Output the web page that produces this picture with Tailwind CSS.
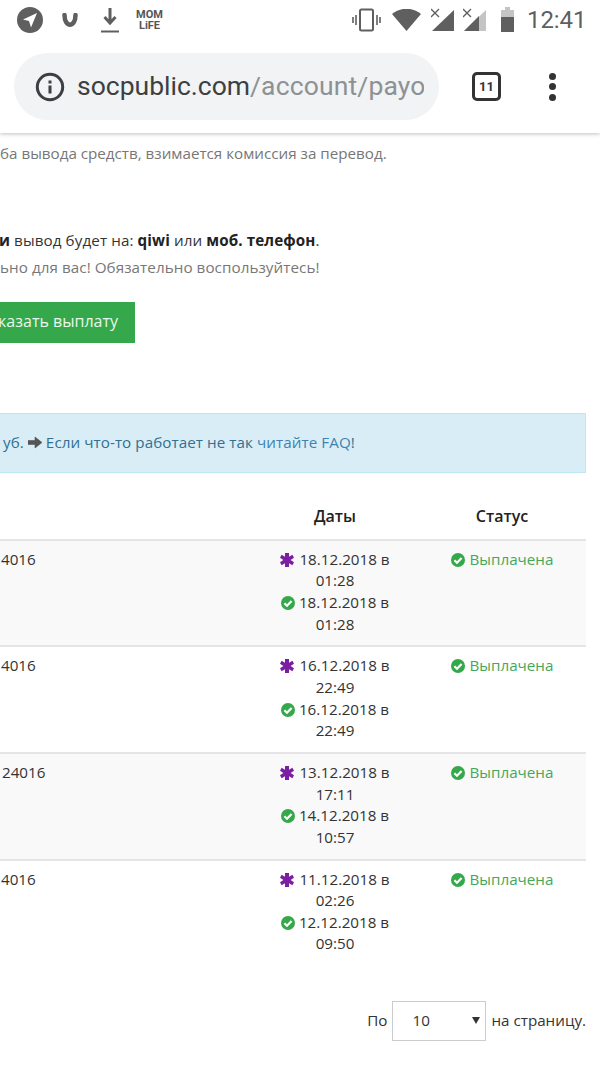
<!DOCTYPE html>
<html lang="ru">
<head>
<meta charset="utf-8">
<script src="https://cdn.jsdelivr.net/npm/@tailwindcss/browser@4"></script>
</head>
<body class="bg-white">
<div class="w-[600px] h-[1066px] overflow-hidden relative font-['Open_Sans',sans-serif] text-[15.2px] leading-[21.6px] text-[#333]">

  <!-- Browser chrome -->
  <header class="h-[133px] bg-white relative z-10 shadow-[0_1px_4px_rgba(0,0,0,0.25)] font-['Roboto',sans-serif]">
    <div class="h-[40px] flex items-center text-[#5f5f5f]">
      <svg class="ml-[17px] w-[26px] h-[26px] shrink-0" viewBox="0 0 26 26"><circle cx="13" cy="13" r="13" fill="#5f5f5f"/><path d="M6 12.5 L20 6 L14 20.5 L12 14 Z" fill="#fff"/></svg>
      <svg class="ml-[19px] w-[16px] h-[15px] shrink-0" viewBox="0 0 16 15"><path d="M2.5 2 C2.5 15 13.5 15 13.5 2" fill="none" stroke="#5f5f5f" stroke-width="4.5" stroke-linecap="round"/></svg>
      <svg class="ml-[23px] w-[18px] h-[26px] shrink-0" viewBox="0 0 18 26"><path d="M9 1 V14 M3.5 10 L9 16 L14.5 10" fill="none" stroke="#5f5f5f" stroke-width="3"/><path d="M0 24.5 H18" stroke="#5f5f5f" stroke-width="2"/></svg>
      <div class="ml-[16px] w-[29px] shrink-0 text-center text-[11px] leading-[11px] font-bold text-[#555]">MOM<br>LiFE</div>
      <svg class="ml-[188px] w-[29px] h-[24px] shrink-0" viewBox="0 0 29 24"><rect x="8" y="1.5" width="13" height="21" rx="1.5" fill="none" stroke="#5f5f5f" stroke-width="2"/><path d="M4 7 V17 M1 9 V15 M25 7 V17 M28 9 V15" stroke="#5f5f5f" stroke-width="1.6"/></svg>
      <svg class="ml-[11px] w-[29px] h-[22px] shrink-0" viewBox="0 0 29 22"><path d="M0 5 C8 -2 21 -2 29 5 L14.5 22 Z" fill="#5f5f5f"/></svg>
      <svg class="ml-[10px] w-[23px] h-[24px] shrink-0" viewBox="0 0 23 24"><path d="M23 2 V23 H1 Z" fill="#5f5f5f"/><path d="M0 1 L8 9 M8 1 L0 9" stroke="#5f5f5f" stroke-width="1.3"/></svg>
      <svg class="ml-[9px] w-[23px] h-[24px] shrink-0" viewBox="0 0 23 24"><path d="M23 2 V23 H1 Z" fill="#c4c4c4"/><path d="M16 8 V23 H1 Z" fill="#5f5f5f"/><path d="M0 1 L8 9 M8 1 L0 9" stroke="#5f5f5f" stroke-width="1.3"/></svg>
      <svg class="ml-[14px] w-[15px] h-[26px] shrink-0" viewBox="0 0 15 26"><path d="M5 0 H10 V3 H14 V25 H1 V3 H5 Z" fill="#c4c4c4"/><rect x="1" y="10" width="13" height="15" fill="#5f5f5f"/></svg>
      <span class="ml-[12px] text-[24px] leading-none text-[#5f5f5f] tracking-[-0.1px]">12:41</span>
    </div>
    <div class="flex items-center mt-[13px]">
      <div class="ml-[14px] w-[425px] h-[67px] rounded-full bg-[#f1f3f4] flex items-center overflow-hidden">
        <svg class="ml-[21px] w-[30px] h-[30px] shrink-0" viewBox="0 0 30 30"><circle cx="15" cy="15" r="12.7" fill="none" stroke="#3c4043" stroke-width="3"/><rect x="13.5" y="13.5" width="3" height="8" fill="#3c4043"/><rect x="13.5" y="8.5" width="3" height="3" fill="#3c4043"/></svg>
        <div class="ml-[12px] w-[347px] overflow-hidden whitespace-nowrap text-[26.5px] leading-none"><span class="text-[#3c4043]">socpublic.com</span><span class="text-[#8e9194] tracking-[0.15px]">/account/payo</span></div>
      </div>
      <div class="ml-[33px] w-[29px] h-[29px] border-[3px] border-[#333] rounded-[5px] flex items-center justify-center text-[13px] font-bold text-[#333] leading-none">11</div>
      <div class="ml-[48px] flex flex-col gap-[3.5px]">
        <span class="block w-[7px] h-[7px] rounded-full bg-[#333]"></span>
        <span class="block w-[7px] h-[7px] rounded-full bg-[#333]"></span>
        <span class="block w-[7px] h-[7px] rounded-full bg-[#333]"></span>
      </div>
    </div>
  </header>

  <!-- Page content, scrolled sideways so the left edge is cut off -->
  <main class="whitespace-nowrap">
    <p class="mt-[10px] text-[#777]">ба вывода средств, взимается комиссия за перевод.</p>

    <p class="mt-[65px] text-[#333] tracking-[0.1px]"><b class="font-bold text-[#222] -ml-[1px]">и</b> вывод будет на: <b class="font-bold text-[#222]">qiwi</b> или <b class="font-bold text-[#222]">моб. телефон</b>.</p>
    <p class="mt-[6px] text-[#777] tracking-[0.07px]">ьно для вас! Обязательно воспользуйтесь!</p>

    <div class="mt-[23px] w-[135px] h-[41px] bg-[#34a84a] text-[#eaf6ec] flex items-center justify-end pr-[17px] text-[16px]">казать выплату</div>

    <div class="mt-[70px] w-[586px] h-[60px] bg-[#d9edf7] border border-l-0 border-[#bce8f1] text-[#31708f] flex items-center">
      <span class="ml-[3px] tracking-[0.07px]">уб. <svg class="inline-block w-[14px] h-[13px] align-[-1px]" viewBox="0 0 14 13"><path d="M0 4.5 H7 V1 L14 6.5 L7 12 V8.5 H0 Z" fill="#555" stroke="#555" stroke-width="0.6" stroke-linejoin="round"/></svg> Если что-то работает не так <a class="text-[#3d83b0]">читайте FAQ</a>!</span>
    </div>

    <!-- Table -->
    <div class="mt-[24px] w-[586px]">
      <div class="flex h-[44px] pt-[9px] font-semibold text-[#222] border-b-2 border-[#e5e5e5] text-[16px]">
        <div class="flex-1"></div>
        <div class="w-[130px] mr-[18px] text-center">Даты</div>
        <div class="w-[168px] text-center">Статус</div>
      </div>

      <div class="flex bg-[#f9f9f9] border-b-2 border-[#e5e5e5] h-[106.6px] pt-[8px]">
        <div class="flex-1 pl-[1px]">4016</div>
        <div class="w-[130px] mr-[18px] text-center whitespace-normal px-[8px]">
          <div><svg class="inline-block w-[14px] h-[14px] align-[-2px] mr-[1px]" viewBox="0 0 14 14"><path d="M5 0 H9 V3.8 L12.4 1.8 L14 4.8 L10.6 7 L14 9.2 L12.4 12.2 L9 10.2 V14 H5 V10.2 L1.6 12.2 L0 9.2 L3.4 7 L0 4.8 L1.6 1.8 L5 3.8 Z" fill="#7b1fa2"/></svg> 18.12.2018 в 01:28</div>
          <div><svg class="inline-block w-[14px] h-[14px] align-[-2px] mr-[4px]" viewBox="0 0 14 14"><circle cx="7" cy="7" r="7" fill="#34a84a"/><path d="M3.4 7.2 L6 9.8 L10.6 5" fill="none" stroke="#fff" stroke-width="2.2"/></svg>18.12.2018 в 01:28</div>
        </div>
        <div class="w-[168px] text-center text-[#43a85a]"><svg class="inline-block w-[14px] h-[14px] align-[-2px] mr-[1px]" viewBox="0 0 14 14"><circle cx="7" cy="7" r="7" fill="#34a84a"/><path d="M3.4 7.2 L6 9.8 L10.6 5" fill="none" stroke="#fff" stroke-width="2.2"/></svg> Выплачена</div>
      </div>

      <div class="flex bg-white border-b-2 border-[#e5e5e5] h-[106.6px] pt-[8px]">
        <div class="flex-1 pl-[1px]">4016</div>
        <div class="w-[130px] mr-[18px] text-center whitespace-normal px-[8px]">
          <div><svg class="inline-block w-[14px] h-[14px] align-[-2px] mr-[1px]" viewBox="0 0 14 14"><path d="M5 0 H9 V3.8 L12.4 1.8 L14 4.8 L10.6 7 L14 9.2 L12.4 12.2 L9 10.2 V14 H5 V10.2 L1.6 12.2 L0 9.2 L3.4 7 L0 4.8 L1.6 1.8 L5 3.8 Z" fill="#7b1fa2"/></svg> 16.12.2018 в 22:49</div>
          <div><svg class="inline-block w-[14px] h-[14px] align-[-2px] mr-[4px]" viewBox="0 0 14 14"><circle cx="7" cy="7" r="7" fill="#34a84a"/><path d="M3.4 7.2 L6 9.8 L10.6 5" fill="none" stroke="#fff" stroke-width="2.2"/></svg>16.12.2018 в 22:49</div>
        </div>
        <div class="w-[168px] text-center text-[#43a85a]"><svg class="inline-block w-[14px] h-[14px] align-[-2px] mr-[1px]" viewBox="0 0 14 14"><circle cx="7" cy="7" r="7" fill="#34a84a"/><path d="M3.4 7.2 L6 9.8 L10.6 5" fill="none" stroke="#fff" stroke-width="2.2"/></svg> Выплачена</div>
      </div>

      <div class="flex bg-[#f9f9f9] border-b-2 border-[#e5e5e5] h-[106.6px] pt-[8px]">
        <div class="flex-1 pl-[2px]">24016</div>
        <div class="w-[130px] mr-[18px] text-center whitespace-normal px-[8px]">
          <div><svg class="inline-block w-[14px] h-[14px] align-[-2px] mr-[1px]" viewBox="0 0 14 14"><path d="M5 0 H9 V3.8 L12.4 1.8 L14 4.8 L10.6 7 L14 9.2 L12.4 12.2 L9 10.2 V14 H5 V10.2 L1.6 12.2 L0 9.2 L3.4 7 L0 4.8 L1.6 1.8 L5 3.8 Z" fill="#7b1fa2"/></svg> 13.12.2018 в 17:11</div>
          <div><svg class="inline-block w-[14px] h-[14px] align-[-2px] mr-[4px]" viewBox="0 0 14 14"><circle cx="7" cy="7" r="7" fill="#34a84a"/><path d="M3.4 7.2 L6 9.8 L10.6 5" fill="none" stroke="#fff" stroke-width="2.2"/></svg>14.12.2018 в 10:57</div>
        </div>
        <div class="w-[168px] text-center text-[#43a85a]"><svg class="inline-block w-[14px] h-[14px] align-[-2px] mr-[1px]" viewBox="0 0 14 14"><circle cx="7" cy="7" r="7" fill="#34a84a"/><path d="M3.4 7.2 L6 9.8 L10.6 5" fill="none" stroke="#fff" stroke-width="2.2"/></svg> Выплачена</div>
      </div>

      <div class="flex bg-white h-[106.6px] pt-[8px]">
        <div class="flex-1 pl-[1px]">4016</div>
        <div class="w-[130px] mr-[18px] text-center whitespace-normal px-[8px]">
          <div><svg class="inline-block w-[14px] h-[14px] align-[-2px] mr-[1px]" viewBox="0 0 14 14"><path d="M5 0 H9 V3.8 L12.4 1.8 L14 4.8 L10.6 7 L14 9.2 L12.4 12.2 L9 10.2 V14 H5 V10.2 L1.6 12.2 L0 9.2 L3.4 7 L0 4.8 L1.6 1.8 L5 3.8 Z" fill="#7b1fa2"/></svg> 11.12.2018 в 02:26</div>
          <div><svg class="inline-block w-[14px] h-[14px] align-[-2px] mr-[4px]" viewBox="0 0 14 14"><circle cx="7" cy="7" r="7" fill="#34a84a"/><path d="M3.4 7.2 L6 9.8 L10.6 5" fill="none" stroke="#fff" stroke-width="2.2"/></svg>12.12.2018 в 09:50</div>
        </div>
        <div class="w-[168px] text-center text-[#43a85a]"><svg class="inline-block w-[14px] h-[14px] align-[-2px] mr-[1px]" viewBox="0 0 14 14"><circle cx="7" cy="7" r="7" fill="#34a84a"/><path d="M3.4 7.2 L6 9.8 L10.6 5" fill="none" stroke="#fff" stroke-width="2.2"/></svg> Выплачена</div>
      </div>
    </div>

    <!-- Per page -->
    <div class="mt-[34px] w-[586px] flex justify-end items-center">
      <span>По</span>
      <div class="ml-[5px] w-[94px] h-[40px] border border-[#ccc] flex items-center justify-between pl-[19px] pr-[5px]">
        <span>10</span>
        <svg class="w-[8px] h-[7px] mb-[2px]" viewBox="0 0 8 7"><path d="M0 0 H8 L4 7 Z" fill="#333"/></svg>
      </div>
      <span class="ml-[5px]">на страницу.</span>
    </div>
  </main>
</div>
</body>
</html>
